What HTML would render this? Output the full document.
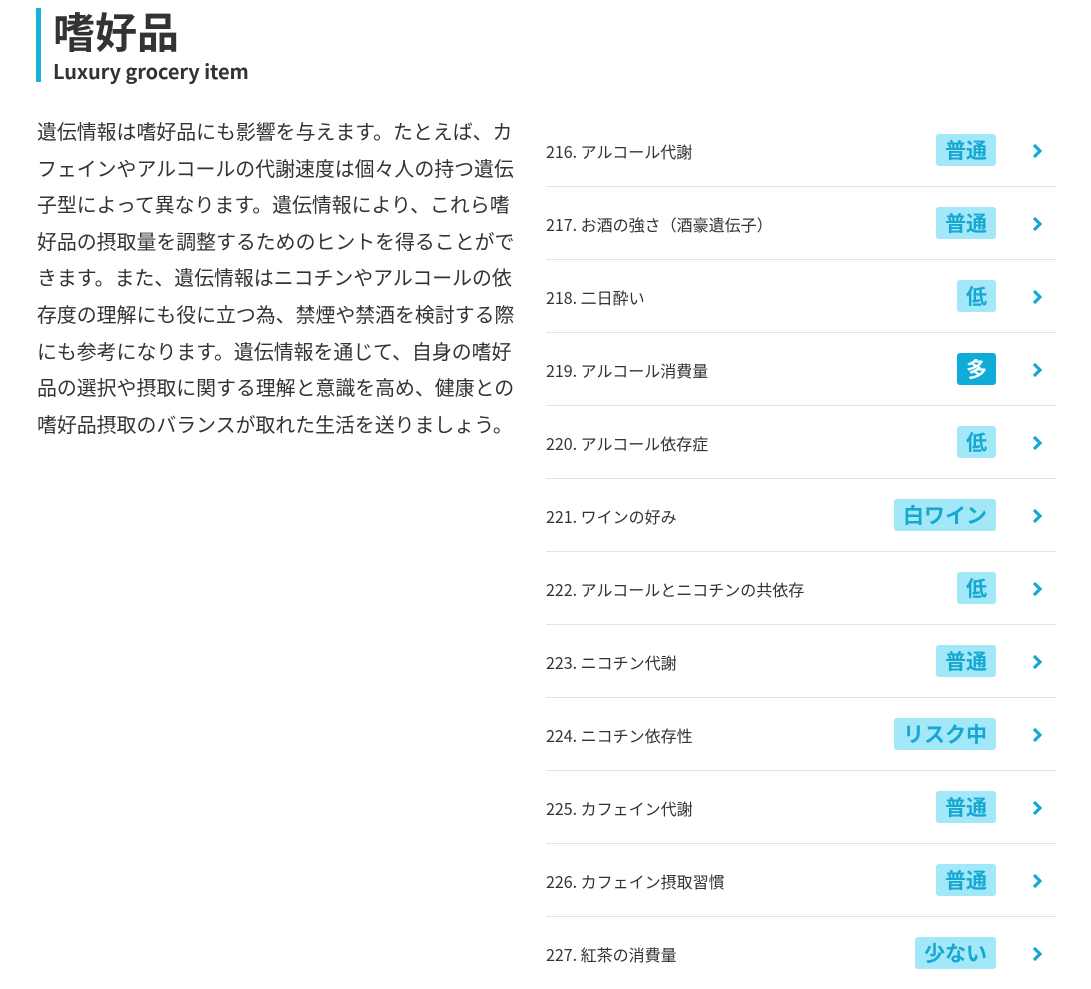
<!DOCTYPE html>
<html><head><meta charset="utf-8"><style>
body{margin:0;background:#fff;font-family:"Noto Sans CJK JP",sans-serif;color:#333;}
.h{position:absolute;left:36px;top:8px;height:74px;border-left:5px solid #16b0d8;padding-left:12px;}
.h1{font-size:42px;font-weight:bold;line-height:46px;margin-top:0px;color:#333;}
.h2{font-size:20px;font-weight:bold;line-height:26px;margin-top:4px;letter-spacing:-0.1px;}
.p{position:absolute;left:37px;top:113px;width:490px;font-size:19.9px;line-height:36.6px;color:#333;white-space:nowrap;}
.list{position:absolute;left:546px;top:114px;width:510px;}
.row{height:72px;border-bottom:1px solid #e3e3e3;position:relative;font-size:16px;}
.row:last-child{border-bottom:none}
.t{position:absolute;left:0;top:25px;line-height:24px;}
.b{position:absolute;right:60px;top:20px;height:32px;line-height:32px;padding:0 9px;border-radius:3px;background:#a2e8f9;color:#16a8d0;font-weight:bold;font-size:21px;}
.b.d{background:#10acd9;color:#fff}
.c{position:absolute;right:12px;top:28px;width:14px;height:18px;}
</style></head><body>
<div class="h"><div class="h1">嗜好品</div><div class="h2">Luxury grocery item</div></div>
<div class="p">遺伝情報は嗜好品にも影響を与えます。たとえば、カ<br>フェインやアルコールの代謝速度は個々人の持つ遺伝<br>子型によって異なります。遺伝情報により、これら嗜<br>好品の摂取量を調整するためのヒントを得ることがで<br>きます。また、遺伝情報はニコチンやアルコールの依<br>存度の理解にも役に立つ為、禁煙や禁酒を検討する際<br>にも参考になります。遺伝情報を通じて、自身の嗜好<br>品の選択や摂取に関する理解と意識を高め、健康との<br>嗜好品摂取のバランスが取れた生活を送りましょう。</div>
<div class="list">
<div class="row"><span class="t">216. アルコール代謝</span><span class="b">普通</span><svg class="c" viewBox="0 0 14 18"><path d="M4 3l6 6-6 6" fill="none" stroke="#16a8d0" stroke-width="3.2"/></svg></div>
<div class="row"><span class="t">217. お酒の強さ（酒豪遺伝子）</span><span class="b">普通</span><svg class="c" viewBox="0 0 14 18"><path d="M4 3l6 6-6 6" fill="none" stroke="#16a8d0" stroke-width="3.2"/></svg></div>
<div class="row"><span class="t">218. 二日酔い</span><span class="b">低</span><svg class="c" viewBox="0 0 14 18"><path d="M4 3l6 6-6 6" fill="none" stroke="#16a8d0" stroke-width="3.2"/></svg></div>
<div class="row"><span class="t">219. アルコール消費量</span><span class="b d">多</span><svg class="c" viewBox="0 0 14 18"><path d="M4 3l6 6-6 6" fill="none" stroke="#16a8d0" stroke-width="3.2"/></svg></div>
<div class="row"><span class="t">220. アルコール依存症</span><span class="b">低</span><svg class="c" viewBox="0 0 14 18"><path d="M4 3l6 6-6 6" fill="none" stroke="#16a8d0" stroke-width="3.2"/></svg></div>
<div class="row"><span class="t">221. ワインの好み</span><span class="b">白ワイン</span><svg class="c" viewBox="0 0 14 18"><path d="M4 3l6 6-6 6" fill="none" stroke="#16a8d0" stroke-width="3.2"/></svg></div>
<div class="row"><span class="t">222. アルコールとニコチンの共依存</span><span class="b">低</span><svg class="c" viewBox="0 0 14 18"><path d="M4 3l6 6-6 6" fill="none" stroke="#16a8d0" stroke-width="3.2"/></svg></div>
<div class="row"><span class="t">223. ニコチン代謝</span><span class="b">普通</span><svg class="c" viewBox="0 0 14 18"><path d="M4 3l6 6-6 6" fill="none" stroke="#16a8d0" stroke-width="3.2"/></svg></div>
<div class="row"><span class="t">224. ニコチン依存性</span><span class="b">リスク中</span><svg class="c" viewBox="0 0 14 18"><path d="M4 3l6 6-6 6" fill="none" stroke="#16a8d0" stroke-width="3.2"/></svg></div>
<div class="row"><span class="t">225. カフェイン代謝</span><span class="b">普通</span><svg class="c" viewBox="0 0 14 18"><path d="M4 3l6 6-6 6" fill="none" stroke="#16a8d0" stroke-width="3.2"/></svg></div>
<div class="row"><span class="t">226. カフェイン摂取習慣</span><span class="b">普通</span><svg class="c" viewBox="0 0 14 18"><path d="M4 3l6 6-6 6" fill="none" stroke="#16a8d0" stroke-width="3.2"/></svg></div>
<div class="row"><span class="t">227. 紅茶の消費量</span><span class="b">少ない</span><svg class="c" viewBox="0 0 14 18"><path d="M4 3l6 6-6 6" fill="none" stroke="#16a8d0" stroke-width="3.2"/></svg></div>
</div>
</body></html>
